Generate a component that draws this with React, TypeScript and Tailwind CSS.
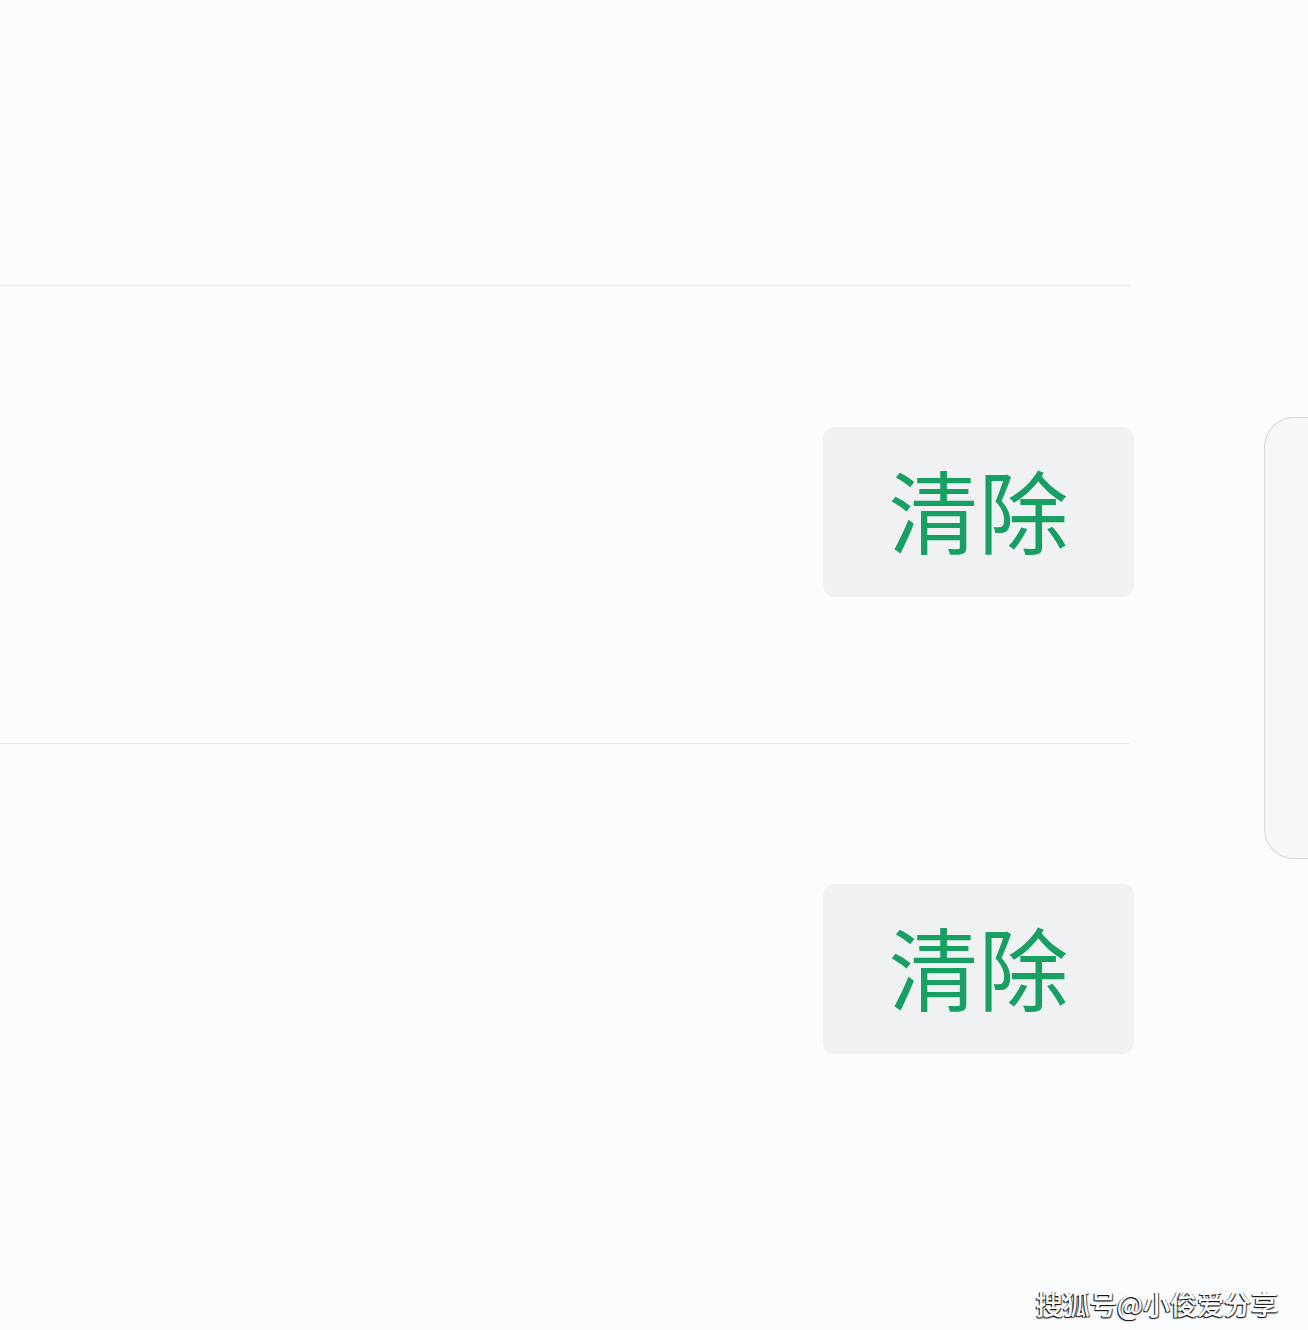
const ClearButton = () => (
  <button className="flex h-[170px] w-[311px] items-center justify-center rounded-[12px] bg-[#f0f1f3] pb-[8px] text-[90px] leading-none text-[#17a062] [font-family:'Noto_Sans_CJK_SC',sans-serif]">
    清除
  </button>
);

export default function App() {
  return (
    <div className="relative flex h-[1330px] w-[1308px] overflow-hidden bg-[#fbfcfe]">
      {/* main list */}
      <div className="flex w-[1134px] flex-col">
        <div className="mr-[4px] h-[286px] border-b border-[#e6e8ef]" />
        <div className="mr-[4px] h-[458px] border-b border-[#e6e8ef] pt-[141px]">
          <div className="-mr-[4px] flex justify-end">
            <ClearButton />
          </div>
        </div>
        <div className="flex flex-1 items-start justify-end pt-[140px]">
          <ClearButton />
        </div>
      </div>

      {/* side handle */}
      <div className="flex flex-1 justify-end">
        <div className="mt-[417px] h-[442px] w-[44px] rounded-l-[30px] border border-r-0 border-[#d6d7dc] bg-[#f6f7f9]" />
      </div>

      {/* watermark */}
      <div className="absolute bottom-[13px] right-[30px] text-[27px] font-medium leading-none text-white [font-family:'Noto_Sans_CJK_SC',sans-serif] [text-shadow:-1px_1px_1px_#111,1px_1px_1px_#333]">
        搜狐号@小俊爱分享
      </div>
    </div>
  );
}
